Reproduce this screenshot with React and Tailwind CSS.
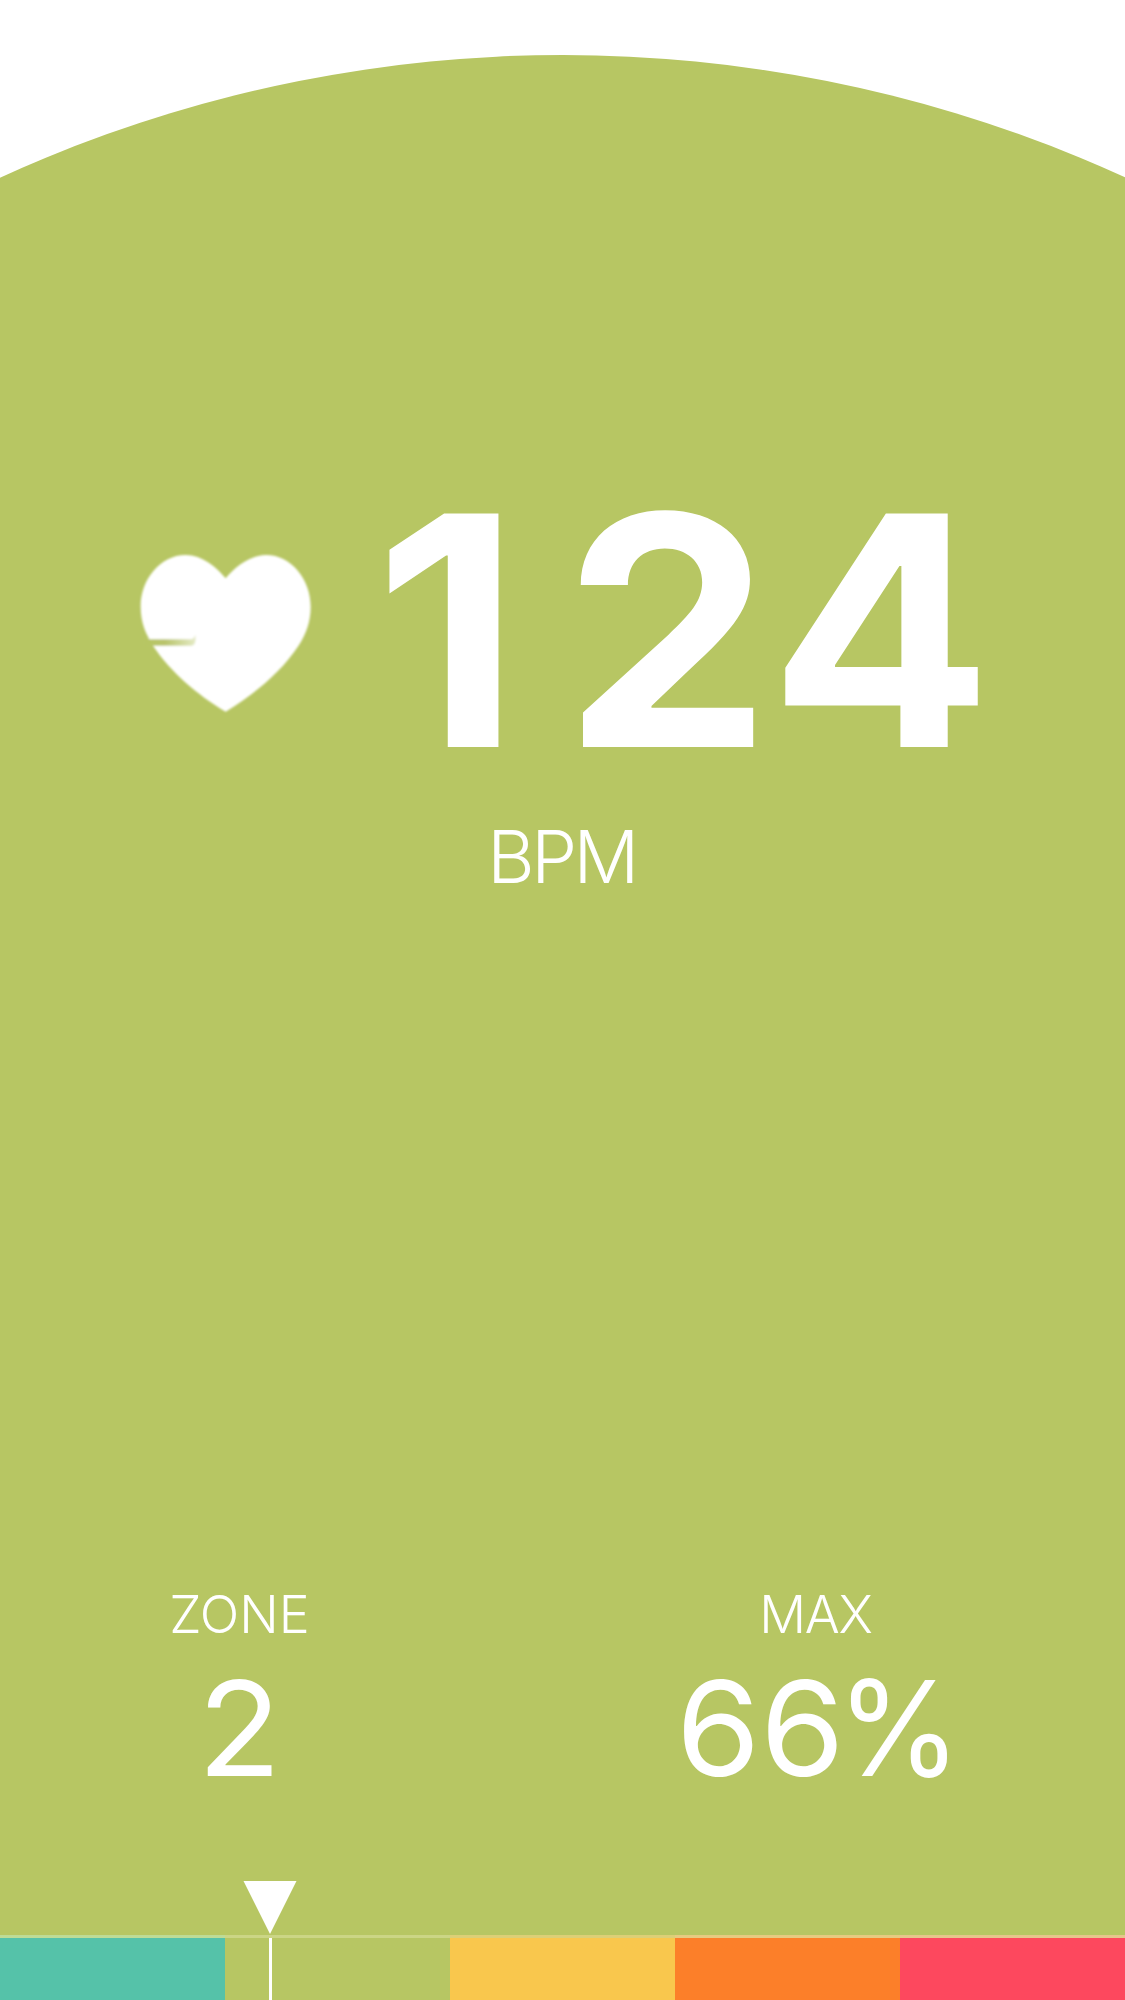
const zones = [
  { id: 1, fill: "bg-[#55c2a9]", edge: "bg-[#bddb96]" },
  { id: 2, fill: "bg-[#b7c663]", edge: "bg-[#cbd585]" },
  { id: 3, fill: "bg-[#f9c74d]", edge: "bg-[#dccf76]" },
  { id: 4, fill: "bg-[#fc7f29]", edge: "bg-[#e6cb80]" },
  { id: 5, fill: "bg-[#fd485e]", edge: "bg-[#e6c58b]" },
];

function Heart() {
  return (
    <svg className="h-[200px] w-[220px] shrink-0" viewBox="0 0 660 600" aria-label="Heart rate">
      <defs>
        <linearGradient id="notch" x1="85" x2="228" y1="0" y2="0" gradientUnits="userSpaceOnUse">
          <stop offset="0" stopColor="#b7c663" />
          <stop offset="0.35" stopColor="#b9c46c" />
          <stop offset="1" stopColor="#b7c663" stopOpacity="0.35" />
        </linearGradient>
        <filter id="soften" x="-5%" y="-5%" width="110%" height="110%">
          <feGaussianBlur stdDeviation="2.5" />
        </filter>
      </defs>
      <g filter="url(#soften)">
        <path
          fill="#fff"
          d="M317 145C290 112 246 75 197 75C121 75 62 149 62 229C62 278 77 313 101 350C151 424 231 494 317 545C405 492 485 424 535 348C559 311 572 274 572 230C572 149 514 75 438 75C389 75 344 112 317 145Z"
        />
        <path fill="url(#notch)" d="M75 328H210Q222 328 226 314Q230 347 214 347H75Z" />
      </g>
    </svg>
  );
}

function Stat({ label, value, className, labelClass }) {
  return (
    <div className={className}>
      <div className={`text-[52px] leading-[52px] font-light ${labelClass}`}>{label}</div>
      <div className="mt-[21px] text-[132px] leading-[132px]">{value}</div>
    </div>
  );
}

export default function App() {
  return (
    <div className="flex h-[2000px] w-[1125px] flex-col overflow-hidden bg-[#b7c663] font-['Inter',sans-serif] text-white">
      <header className="flex h-[178px] shrink-0 justify-center overflow-hidden bg-white">
        <div className="mt-[54.5px] size-[2706px] shrink-0 rounded-full bg-[#b7c663]" />
      </header>

      <main className="flex grow flex-col">
        <div className="mt-[292px] flex h-[321px] items-start">
          <div className="mt-[60px] ml-[120px]">
            <Heart />
          </div>
          <div className="ml-[34px] flex text-[321px] leading-[321px] font-bold">
            <span className="w-[189px] origin-left scale-x-[1.06]">1</span>
            <span className="w-[206px] origin-left scale-x-[1.03]">2</span>
            <span className="w-[206px] origin-left scale-x-[1.03]">4</span>
          </div>
        </div>
        <div className="mt-[29px] pr-[2px] text-center text-[73px] leading-[73px] font-light tracking-[-3.5px]">
          BPM
        </div>

        <div className="mt-[696px] flex text-center">
          <Stat
            className="ml-[39px] w-[400px]"
            label="ZONE"
            labelClass="pl-px"
            value={<span className="inline-block scale-x-[1.04]">2</span>}
          />
          <Stat
            className="ml-[177px] w-[400px]"
            label="MAX"
            labelClass="pr-px tracking-[-1.2px]"
            value={
              <>
                <span className="inline-block origin-left translate-x-[7px] scale-x-[1.03]">66</span>
                <span className="inline-block origin-right -translate-x-[1.5px] scale-x-[0.96]">%</span>
              </>
            }
          />
        </div>
      </main>

      <footer className="relative flex h-[65px] shrink-0">
        {zones.map((z) => (
          <div key={z.id} className="flex flex-1 flex-col">
            <div className={`h-[3px] ${z.edge}`} />
            <div className={`grow ${z.fill}`} />
          </div>
        ))}
        <svg className="absolute -top-[54px] left-[243px] h-[53px] w-[54px]" viewBox="0 0 54 53">
          <path fill="#fff" d="M0.5 0H53.5L27 53Z" />
        </svg>
        <div className="absolute top-[3px] bottom-0 left-[269px] w-[3px] bg-white" />
      </footer>
    </div>
  );
}
